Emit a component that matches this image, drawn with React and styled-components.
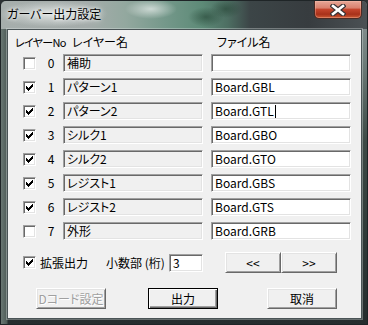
import React from 'react';
import styled, { createGlobalStyle } from 'styled-components';

const UI_FONT = `"Noto Sans CJK JP", "Noto Sans", sans-serif`;

const Global = createGlobalStyle`
  html, body { margin: 0; padding: 0; width: 368px; height: 325px; overflow: hidden; background: #2b3133; }
  #root { width: 368px; height: 325px; }
  * { box-sizing: border-box; }
`;

const Window = styled.div`
  width: 368px;
  height: 325px;
  display: flex;
  flex-direction: column;
  border: 1px solid #1f2527;
  border-radius: 6px 6px 0 0;
  overflow: hidden;
  background:
    linear-gradient(90deg, #6a7773 0px, #4d5b57 6px, rgba(0,0,0,0) 7px),
    linear-gradient(180deg, #8e9898 0px, #6f7d7a 60px, #3d4a46 140px, #2f3937 240px, #262d2e 323px);
  font-family: ${UI_FONT};
  font-feature-settings: "palt";
  font-size: 12px;
  color: #000;
`;

const TitleBar = styled.div`
  height: 28px;
  flex: none;
  display: flex;
  align-items: flex-start;
  justify-content: space-between;
  padding-left: 6px;
  padding-right: 5px;
  background:
    radial-gradient(ellipse 55px 13px at 52px 13px, rgba(240,244,243,0.75), rgba(240,244,243,0) 100%),
    radial-gradient(ellipse 26px 10px at 150px 8px, rgba(255,255,255,0.6), rgba(255,255,255,0) 100%),
    radial-gradient(ellipse 18px 10px at 205px 16px, rgba(30,60,45,0.55), rgba(30,60,45,0) 100%),
    radial-gradient(ellipse 16px 9px at 225px 8px, rgba(30,60,45,0.5), rgba(30,60,45,0) 100%),
    linear-gradient(90deg, #a6aeac 0%, #a4acaa 24%, #93a89f 34%, #74988a 45%, #5d8a77 55%, #4d6e62 62%, #3c4547 68%, #373c3f 84%, #4b5154 100%);
`;

const Title = styled.div`
  padding-top: 5px;
  line-height: 16px;
  font-size: 12px;
  color: #000;
  text-shadow: 0 0 6px rgba(255,255,255,0.9), 0 0 3px rgba(255,255,255,0.8);
`;

const CloseButton = styled.div`
  width: 48px;
  height: 18px;
  display: flex;
  align-items: center;
  justify-content: center;
  border: 1px solid #4a2a24;
  border-top: none;
  border-radius: 0 0 5px 5px;
  background: linear-gradient(180deg, #e6a797 0%, #d9826f 40%, #c4452c 50%, #a8311a 78%, #cc5a34 100%);
  box-shadow: inset 0 0 0 1px rgba(255,200,180,0.35);
`;

const Client = styled.div`
  flex: 1;
  margin: 0 5px 5px 6px;
  background: #f0f0f0;
  border: 1px solid #4a5456;
  box-shadow: 0 0 0 1px rgba(230,236,236,0.35);
  display: flex;
  flex-direction: column;
`;

const HeaderRow = styled.div`
  margin-top: 4px;
  height: 16px;
  line-height: 16px;
  display: flex;
  align-items: baseline;
  padding-left: 7px;
`;

const HeadCell = styled.div`
  width: ${p => p.$w}px;
  flex: none;
  white-space: nowrap;
  font-size: ${p => (p.$tight ? '11px' : '12px')};
  letter-spacing: ${p => (p.$tight ? '-0.7px' : 'normal')};
`;

const Rows = styled.div`
  margin-top: 4px;
  display: flex;
  flex-direction: column;
  gap: 6px;
`;

const Row = styled.div`
  height: 18px;
  display: flex;
  align-items: center;
  padding-left: 15px;
`;

const Box = styled.div`
  width: 13px;
  height: 13px;
  flex: none;
  background: #fff;
  border: 1px solid;
  border-color: #a0a0a0 #fff #fff #a0a0a0;
  box-shadow: inset 1px 1px #696969, inset -1px -1px #e3e3e3;
  display: flex;
  align-items: center;
  justify-content: center;
`;

const LayerNo = styled.div`
  width: 27px;
  flex: none;
  text-align: center;
  padding-left: 3px;
  line-height: 18px;
`;

const Field = styled.div`
  width: ${p => p.$w}px;
  height: 18px;
  flex: none;
  margin-right: ${p => p.$mr || 0}px;
  background: ${p => (p.$readonly ? '#f0f0f0' : '#fff')};
  border: 1px solid;
  border-color: #a0a0a0 #fff #fff #a0a0a0;
  box-shadow: inset 1px 1px #696969, inset -1px -1px #e3e3e3;
  padding-left: 3px;
  line-height: 16px;
  white-space: nowrap;
  overflow: hidden;
  display: flex;
  align-items: center;
`;

const Caret = styled.span`
  display: inline-block;
  width: 1px;
  height: 13px;
  background: #000;
  margin-left: 1px;
`;

const OptionsRow = styled.div`
  margin-top: 12px;
  height: 21px;
  display: flex;
  align-items: center;
  padding-left: 15px;
`;

const Label = styled.div`
  width: ${p => (p.$w ? `${p.$w}px` : 'auto')};
  margin-left: ${p => p.$ml || 0}px;
  flex: none;
  line-height: 16px;
  white-space: nowrap;
`;

const ButtonPair = styled.div`
  display: flex;
  margin-left: 22px;
`;

const Button = styled.div`
  width: ${p => p.$w}px;
  height: 21px;
  flex: none;
  margin-left: ${p => p.$ml || 0}px;
  display: flex;
  align-items: center;
  justify-content: center;
  background: #f0f0f0;
  line-height: 16px;
  border: 1px solid;
  border-color: ${p => (p.$default ? '#000' : '#fff #696969 #696969 #fff')};
  box-shadow: ${p =>
    p.$default
      ? 'inset 1px 1px #fff, inset -1px -1px #696969, inset -2px -2px #a0a0a0'
      : 'inset 1px 1px #e3e3e3, inset -1px -1px #a0a0a0'};
  color: ${p => (p.$disabled ? '#a0a0a0' : '#000')};
  text-shadow: ${p => (p.$disabled ? '1px 1px 0 #fff' : 'none')};
`;

const ButtonRow = styled.div`
  margin-top: 15px;
  display: flex;
`;

const CHECK = [
  '......#',
  '.....##',
  '#...###',
  '##.###.',
  '#####..',
  '.###...',
  '..#....',
];

function CheckMark() {
  const rects = [];
  CHECK.forEach((row, y) =>
    row.split('').forEach((c, x) => {
      if (c === '#') rects.push(<rect key={`${x}-${y}`} x={x} y={y} width="1" height="1" />);
    })
  );
  return (
    <svg width="7" height="7" viewBox="0 0 7 7" shapeRendering="crispEdges" fill="#000">
      {rects}
    </svg>
  );
}

function CheckBox({ checked }) {
  return <Box>{checked && <CheckMark />}</Box>;
}

function CloseGlyph() {
  return (
    <svg width="16" height="12" viewBox="0 0 16 12">
      <path d="M3 2 L13 10 M13 2 L3 10" stroke="#3b3436" strokeWidth="5" strokeLinecap="square" fill="none" />
      <path d="M3 2 L13 10 M13 2 L3 10" stroke="#fff" strokeWidth="2.6" strokeLinecap="square" fill="none" />
    </svg>
  );
}

const layers = [
  { no: 0, checked: false, name: '補助', file: '' },
  { no: 1, checked: true, name: 'パターン1', file: 'Board.GBL' },
  { no: 2, checked: true, name: 'パターン2', file: 'Board.GTL', caret: true },
  { no: 3, checked: true, name: 'シルク1', file: 'Board.GBO' },
  { no: 4, checked: true, name: 'シルク2', file: 'Board.GTO' },
  { no: 5, checked: true, name: 'レジスト1', file: 'Board.GBS' },
  { no: 6, checked: true, name: 'レジスト2', file: 'Board.GTS' },
  { no: 7, checked: false, name: '外形', file: 'Board.GRB' },
];

export default function App() {
  return (
    <>
      <Global />
      <Window>
        <TitleBar>
          <Title>ガーバー出力設定</Title>
          <CloseButton>
            <CloseGlyph />
          </CloseButton>
        </TitleBar>
        <Client>
          <HeaderRow>
            <HeadCell $w={57} $tight>レイヤーNo</HeadCell>
            <HeadCell $w={145}>レイヤー名</HeadCell>
            <HeadCell $w={100}>ファイル名</HeadCell>
          </HeaderRow>
          <Rows>
            {layers.map(l => (
              <Row key={l.no}>
                <CheckBox checked={l.checked} />
                <LayerNo>{l.no}</LayerNo>
                <Field $w={140} $mr={8} $readonly>{l.name}</Field>
                <Field $w={140}>
                  {l.file}
                  {l.caret && <Caret />}
                </Field>
              </Row>
            ))}
          </Rows>
          <OptionsRow>
            <CheckBox checked />
            <Label $ml={4} $w={66}>拡張出力</Label>
            <Label $w={63}>小数部 (桁)</Label>
            <Field $w={34}>3</Field>
            <ButtonPair>
              <Button $w={56}>&lt;&lt;</Button>
              <Button $w={56}>&gt;&gt;</Button>
            </ButtonPair>
          </OptionsRow>
          <ButtonRow>
            <Button $w={70} $ml={28} $disabled>Dコード設定</Button>
            <Button $w={70} $ml={42} $default>出力</Button>
            <Button $w={70} $ml={49}>取消</Button>
          </ButtonRow>
        </Client>
      </Window>
    </>
  );
}
